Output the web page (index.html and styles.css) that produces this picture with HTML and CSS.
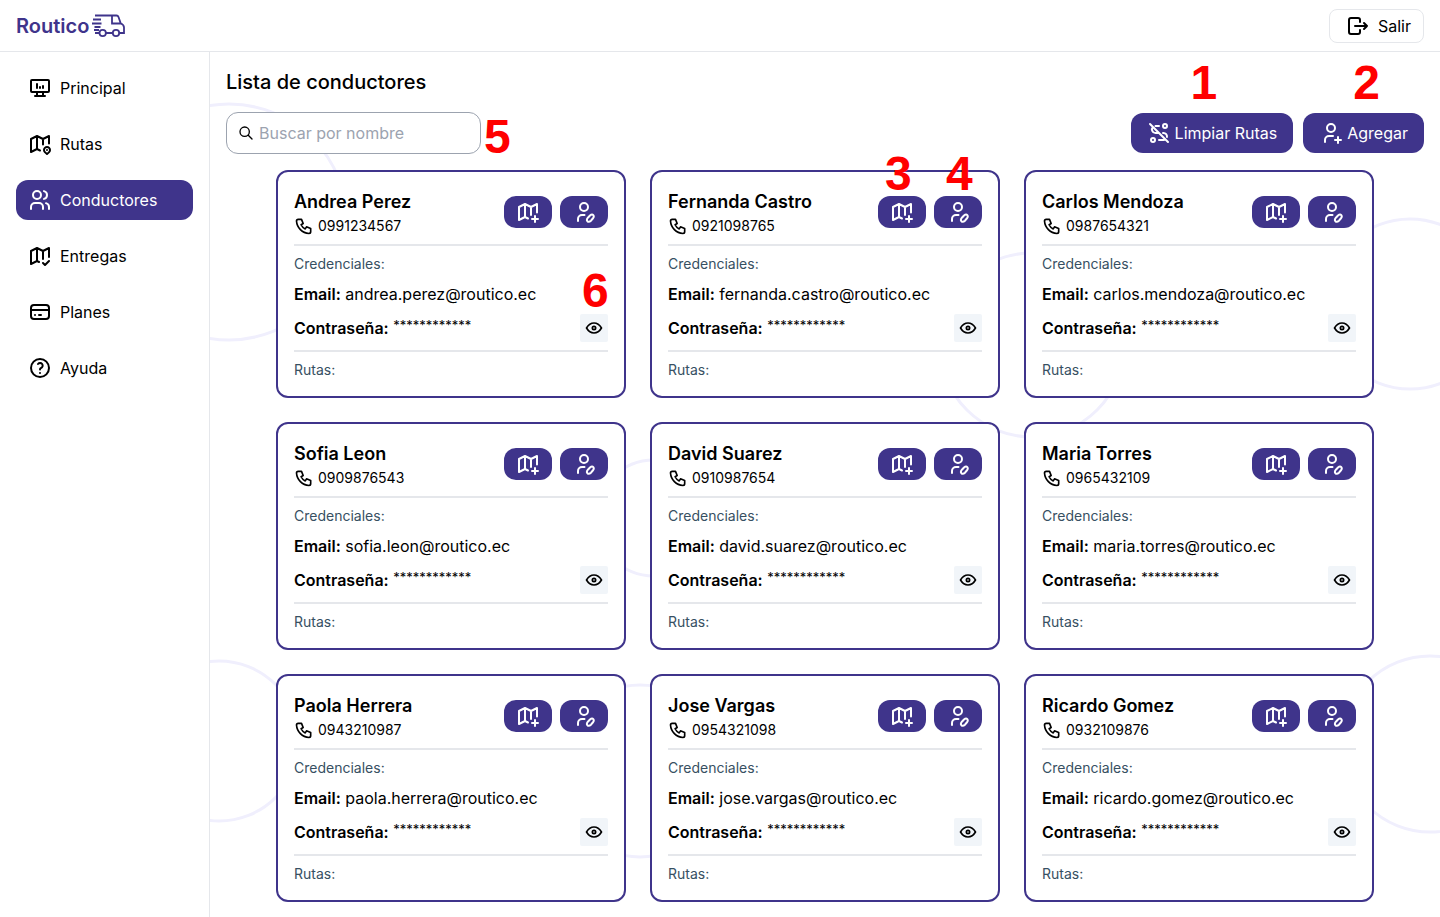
FILE: index.html
```html
<!DOCTYPE html>
<html lang="es">
<head>
<meta charset="utf-8">
<meta name="viewport" content="width=device-width, initial-scale=1">
<title>Routico - Lista de conductores</title>
<link rel="stylesheet" href="styles.css">
</head>
<body>
<svg class="sprite" aria-hidden="true">
  <symbol id="i-desktop" viewBox="0 0 24 24"><path d="M3 5a1 1 0 0 1 1 -1h16a1 1 0 0 1 1 1v10a1 1 0 0 1 -1 1h-16a1 1 0 0 1 -1 -1zM7 20h10M9 16v4M15 16v4M9 12v-4M12 12v-1M15 12v-2"/></symbol>
  <symbol id="i-map-pin" viewBox="0 0 24 24"><path d="M12 18.500l-3 -1.500l-6 3v-13l6 -3l6 3l6 -3v7.500M9 4v13M15 7v5.500M21.121 20.121a3 3 0 1 0 -4.242 0c.418 .419 1.125 1.045 2.121 1.879c1.051 -.89 1.759 -1.516 2.121 -1.879zM19 18v.01"/></symbol>
  <symbol id="i-users" viewBox="0 0 24 24"><path d="M5 7a4 4 0 1 0 8 0a4 4 0 1 0 -8 0M3 21v-2a4 4 0 0 1 4 -4h4a4 4 0 0 1 4 4v2M16 3.130a4 4 0 0 1 0 7.750M21 21v-2a4 4 0 0 0 -3 -3.850"/></symbol>
  <symbol id="i-map-check" viewBox="0 0 24 24"><path d="M11 18l-2 -1l-6 3v-13l6 -3l6 3l6 -3v9M9 4v13M15 7v8M15 19l2 2l4 -4"/></symbol>
  <symbol id="i-card" viewBox="0 0 24 24"><path d="M3 8a3 3 0 0 1 3 -3h12a3 3 0 0 1 3 3v8a3 3 0 0 1 -3 3h-12a3 3 0 0 1 -3 -3zM3 10h18M7 15h.01M11 15h2"/></symbol>
  <symbol id="i-help" viewBox="0 0 24 24"><path d="M3 12a9 9 0 1 0 18 0a9 9 0 1 0 -18 0M12 17v.01M12 13.500a1.500 1.500 0 0 1 1 -1.500a2.600 2.600 0 1 0 -3 -4"/></symbol>
  <symbol id="i-logout" viewBox="0 0 24 24"><path d="M14 8v-2a2 2 0 0 0 -2 -2h-7a2 2 0 0 0 -2 2v12a2 2 0 0 0 2 2h7a2 2 0 0 0 2 -2v-2M9 12h12l-3 -3M18 15l3 -3"/></symbol>
  <symbol id="i-route-off" viewBox="0 0 24 24"><path d="M4 19a2 2 0 1 0 4 0a2 2 0 1 0 -4 0M16 5a2 2 0 1 0 4 0a2 2 0 1 0 -4 0M12 19h4.500c.71 0 1.372 -.212 1.924 -.576m1.545 -2.459a3.500 3.500 0 0 0 -3.469 -3.965h-.499m-4 0h-3.501a3.500 3.500 0 0 1 -2.477 -5.972m2.477 -1.028h3.500M3 3l18 18"/></symbol>
  <symbol id="i-user-plus" viewBox="0 0 24 24"><path d="M8 7a4 4 0 1 0 8 0a4 4 0 0 0 -8 0M16 19h6M19 16v6M6 21v-2a4 4 0 0 1 4 -4h4"/></symbol>
  <symbol id="i-user-edit" viewBox="0 0 24 24"><path d="M8 7a4 4 0 1 0 8 0a4 4 0 0 0 -8 0M6 21v-2a4 4 0 0 1 4 -4h2.500M18 15.500c1.200 -1 2.700 -1 3.300 -.300c.600 .700 .500 2.100 -.500 3.300l-1.800 2.200c-1.200 1.100 -2.900 1.200 -3.600 .500c-.600 -.700 -.500 -2.300 .500 -3.500z"/></symbol>
  <symbol id="i-map-plus" viewBox="0 0 24 24"><path d="M12 18.500l-3 -1.500l-6 3v-13l6 -3l6 3l6 -3v8.500M9 4v13M15 7v8M16 19h6M19 16v6"/></symbol>
  <symbol id="i-phone" viewBox="0 0 24 24"><path d="M5 4h4l2 5l-2.500 1.500a11 11 0 0 0 5 5l1.500 -2.500l5 2v4a2 2 0 0 1 -2 2a16 16 0 0 1 -15 -15a2 2 0 0 1 2 -2"/></symbol>
  <symbol id="i-eye" viewBox="0 0 24 24"><path d="M10 12a2 2 0 1 0 4 0a2 2 0 0 0 -4 0M21 12c-2.400 4 -5.400 6 -9 6c-3.600 0 -6.600 -2 -9 -6c2.400 -4 5.400 -6 9 -6c3.600 0 6.600 2 9 6"/></symbol>
  <symbol id="i-search" viewBox="0 0 24 24"><path d="M3 10a7 7 0 1 0 14 0a7 7 0 1 0 -14 0M21 21l-6 -6"/></symbol>
</svg>

<header class="topbar">
  <a class="brand" href="#">Routico
    <svg class="truck" viewBox="0 0 33 24" aria-hidden="true"><path d="M3 1.500h21.500q1.500 0 2 1.500l2.300 6.500q3.200 1.200 3.200 4v5.500h-4.500M20 1.500v8h9M21 19h-7M7.500 19H3M1 5.500h8M0 9.500h9.500M2.500 13h6M2 16h5"/><circle cx="10.700" cy="19" r="3.200"/><circle cx="24" cy="19" r="3.200"/></svg>
  </a>
  <button class="logout" type="button"><svg class="icon"><use href="#i-logout"/></svg>Salir</button>
</header>

<div class="shell">
  <nav class="sidebar" aria-label="Menú">
    <a class="nav-item" href="#"><svg class="icon"><use href="#i-desktop"/></svg>Principal</a>
    <a class="nav-item" href="#"><svg class="icon"><use href="#i-map-pin"/></svg>Rutas</a>
    <a class="nav-item active" href="#" aria-current="page"><svg class="icon"><use href="#i-users"/></svg>Conductores</a>
    <a class="nav-item" href="#"><svg class="icon"><use href="#i-map-check"/></svg>Entregas</a>
    <a class="nav-item" href="#"><svg class="icon"><use href="#i-card"/></svg>Planes</a>
    <a class="nav-item" href="#"><svg class="icon"><use href="#i-help"/></svg>Ayuda</a>
  </nav>

  <main class="content">
    <svg class="rings" aria-hidden="true">
      <circle cx="19" cy="170" r="118"/><circle cx="822" cy="293" r="92"/><circle cx="1200" cy="252" r="85"/><circle cx="444" cy="466" r="58"/><circle cx="430" cy="719" r="86"/><circle cx="9" cy="689" r="80"/><circle cx="1220" cy="692" r="88"/>
    </svg>
    <h1 class="title">Lista de conductores</h1>
    <div class="toolbar">
      <div class="search">
        <label for="q"><svg class="icon icon-xs" role="img" aria-label="Buscar"><use href="#i-search"/></svg></label>
        <input id="q" type="text" placeholder="Buscar por nombre">
        <span class="mark mark-side">5</span>
      </div>
      <div class="actions">
        <button class="btn" type="button"><svg class="icon"><use href="#i-route-off"/></svg>Limpiar Rutas<span class="mark mark-above-left">1</span></button>
        <button class="btn" type="button"><svg class="icon"><use href="#i-user-plus"/></svg>Agregar<span class="mark mark-above">2</span></button>
      </div>
    </div>

    <div class="cards">
      <article class="card">
        <div class="card-head"><div><h2 class="name">Andrea Perez</h2><p class="phone"><svg class="icon icon-sm"><use href="#i-phone"/></svg>0991234567</p></div>
          <div class="tools"><button class="tool" type="button" aria-label="Asignar ruta"><svg class="icon"><use href="#i-map-plus"/></svg></button><button class="tool" type="button" aria-label="Editar conductor"><svg class="icon"><use href="#i-user-edit"/></svg></button></div></div>
        <hr class="rule"><p class="caption">Credenciales:</p>
        <p class="field"><b>Email:</b> andrea.perez@routico.ec</p>
        <div class="secret"><p class="field"><b>Contraseña:</b> <span class="stars">************</span></p><button class="eye" type="button" aria-label="Mostrar contraseña"><svg class="icon icon-sm"><use href="#i-eye"/></svg><span class="mark mark-eye">6</span></button></div>
        <hr class="rule"><p class="caption">Rutas:</p>
      </article>
      <article class="card">
        <div class="card-head"><div><h2 class="name">Fernanda Castro</h2><p class="phone"><svg class="icon icon-sm"><use href="#i-phone"/></svg>0921098765</p></div>
          <div class="tools"><button class="tool" type="button" aria-label="Asignar ruta"><svg class="icon"><use href="#i-map-plus"/></svg><span class="mark mark-tool">3</span></button><button class="tool" type="button" aria-label="Editar conductor"><svg class="icon"><use href="#i-user-edit"/></svg><span class="mark mark-tool-end">4</span></button></div></div>
        <hr class="rule"><p class="caption">Credenciales:</p>
        <p class="field"><b>Email:</b> fernanda.castro@routico.ec</p>
        <div class="secret"><p class="field"><b>Contraseña:</b> <span class="stars">************</span></p><button class="eye" type="button" aria-label="Mostrar contraseña"><svg class="icon icon-sm"><use href="#i-eye"/></svg></button></div>
        <hr class="rule"><p class="caption">Rutas:</p>
      </article>
      <article class="card">
        <div class="card-head"><div><h2 class="name">Carlos Mendoza</h2><p class="phone"><svg class="icon icon-sm"><use href="#i-phone"/></svg>0987654321</p></div>
          <div class="tools"><button class="tool" type="button" aria-label="Asignar ruta"><svg class="icon"><use href="#i-map-plus"/></svg></button><button class="tool" type="button" aria-label="Editar conductor"><svg class="icon"><use href="#i-user-edit"/></svg></button></div></div>
        <hr class="rule"><p class="caption">Credenciales:</p>
        <p class="field"><b>Email:</b> carlos.mendoza@routico.ec</p>
        <div class="secret"><p class="field"><b>Contraseña:</b> <span class="stars">************</span></p><button class="eye" type="button" aria-label="Mostrar contraseña"><svg class="icon icon-sm"><use href="#i-eye"/></svg></button></div>
        <hr class="rule"><p class="caption">Rutas:</p>
      </article>
      <article class="card">
        <div class="card-head"><div><h2 class="name">Sofia Leon</h2><p class="phone"><svg class="icon icon-sm"><use href="#i-phone"/></svg>0909876543</p></div>
          <div class="tools"><button class="tool" type="button" aria-label="Asignar ruta"><svg class="icon"><use href="#i-map-plus"/></svg></button><button class="tool" type="button" aria-label="Editar conductor"><svg class="icon"><use href="#i-user-edit"/></svg></button></div></div>
        <hr class="rule"><p class="caption">Credenciales:</p>
        <p class="field"><b>Email:</b> sofia.leon@routico.ec</p>
        <div class="secret"><p class="field"><b>Contraseña:</b> <span class="stars">************</span></p><button class="eye" type="button" aria-label="Mostrar contraseña"><svg class="icon icon-sm"><use href="#i-eye"/></svg></button></div>
        <hr class="rule"><p class="caption">Rutas:</p>
      </article>
      <article class="card">
        <div class="card-head"><div><h2 class="name">David Suarez</h2><p class="phone"><svg class="icon icon-sm"><use href="#i-phone"/></svg>0910987654</p></div>
          <div class="tools"><button class="tool" type="button" aria-label="Asignar ruta"><svg class="icon"><use href="#i-map-plus"/></svg></button><button class="tool" type="button" aria-label="Editar conductor"><svg class="icon"><use href="#i-user-edit"/></svg></button></div></div>
        <hr class="rule"><p class="caption">Credenciales:</p>
        <p class="field"><b>Email:</b> david.suarez@routico.ec</p>
        <div class="secret"><p class="field"><b>Contraseña:</b> <span class="stars">************</span></p><button class="eye" type="button" aria-label="Mostrar contraseña"><svg class="icon icon-sm"><use href="#i-eye"/></svg></button></div>
        <hr class="rule"><p class="caption">Rutas:</p>
      </article>
      <article class="card">
        <div class="card-head"><div><h2 class="name">Maria Torres</h2><p class="phone"><svg class="icon icon-sm"><use href="#i-phone"/></svg>0965432109</p></div>
          <div class="tools"><button class="tool" type="button" aria-label="Asignar ruta"><svg class="icon"><use href="#i-map-plus"/></svg></button><button class="tool" type="button" aria-label="Editar conductor"><svg class="icon"><use href="#i-user-edit"/></svg></button></div></div>
        <hr class="rule"><p class="caption">Credenciales:</p>
        <p class="field"><b>Email:</b> maria.torres@routico.ec</p>
        <div class="secret"><p class="field"><b>Contraseña:</b> <span class="stars">************</span></p><button class="eye" type="button" aria-label="Mostrar contraseña"><svg class="icon icon-sm"><use href="#i-eye"/></svg></button></div>
        <hr class="rule"><p class="caption">Rutas:</p>
      </article>
      <article class="card">
        <div class="card-head"><div><h2 class="name">Paola Herrera</h2><p class="phone"><svg class="icon icon-sm"><use href="#i-phone"/></svg>0943210987</p></div>
          <div class="tools"><button class="tool" type="button" aria-label="Asignar ruta"><svg class="icon"><use href="#i-map-plus"/></svg></button><button class="tool" type="button" aria-label="Editar conductor"><svg class="icon"><use href="#i-user-edit"/></svg></button></div></div>
        <hr class="rule"><p class="caption">Credenciales:</p>
        <p class="field"><b>Email:</b> paola.herrera@routico.ec</p>
        <div class="secret"><p class="field"><b>Contraseña:</b> <span class="stars">************</span></p><button class="eye" type="button" aria-label="Mostrar contraseña"><svg class="icon icon-sm"><use href="#i-eye"/></svg></button></div>
        <hr class="rule"><p class="caption">Rutas:</p>
      </article>
      <article class="card">
        <div class="card-head"><div><h2 class="name">Jose Vargas</h2><p class="phone"><svg class="icon icon-sm"><use href="#i-phone"/></svg>0954321098</p></div>
          <div class="tools"><button class="tool" type="button" aria-label="Asignar ruta"><svg class="icon"><use href="#i-map-plus"/></svg></button><button class="tool" type="button" aria-label="Editar conductor"><svg class="icon"><use href="#i-user-edit"/></svg></button></div></div>
        <hr class="rule"><p class="caption">Credenciales:</p>
        <p class="field"><b>Email:</b> jose.vargas@routico.ec</p>
        <div class="secret"><p class="field"><b>Contraseña:</b> <span class="stars">************</span></p><button class="eye" type="button" aria-label="Mostrar contraseña"><svg class="icon icon-sm"><use href="#i-eye"/></svg></button></div>
        <hr class="rule"><p class="caption">Rutas:</p>
      </article>
      <article class="card">
        <div class="card-head"><div><h2 class="name">Ricardo Gomez</h2><p class="phone"><svg class="icon icon-sm"><use href="#i-phone"/></svg>0932109876</p></div>
          <div class="tools"><button class="tool" type="button" aria-label="Asignar ruta"><svg class="icon"><use href="#i-map-plus"/></svg></button><button class="tool" type="button" aria-label="Editar conductor"><svg class="icon"><use href="#i-user-edit"/></svg></button></div></div>
        <hr class="rule"><p class="caption">Credenciales:</p>
        <p class="field"><b>Email:</b> ricardo.gomez@routico.ec</p>
        <div class="secret"><p class="field"><b>Contraseña:</b> <span class="stars">************</span></p><button class="eye" type="button" aria-label="Mostrar contraseña"><svg class="icon icon-sm"><use href="#i-eye"/></svg></button></div>
        <hr class="rule"><p class="caption">Rutas:</p>
      </article>
    </div>
  </main>
</div>
</body>
</html>
```
FILE: styles.css
```css
:root {
  --brand: #3f348b;
  --line: #e5e7eb;
}
* { box-sizing: border-box; margin: 0; }
body {
  min-height: 100vh;
  display: flex;
  flex-direction: column;
  font: 16px/24px Inter, "Noto Sans", sans-serif;
  color: #000;
  background: #fff;
}
button, input { font: inherit; color: inherit; }
button { border: 0; padding: 0; cursor: pointer; }
a { color: inherit; text-decoration: none; }
.sprite { position: absolute; width: 0; height: 0; }
.icon {
  width: 24px; height: 24px; flex: none; display: block;
  fill: none; stroke: currentColor; stroke-width: 2;
  stroke-linecap: round; stroke-linejoin: round;
}
.icon-sm { width: 20px; height: 20px; }
.icon-xs { width: 16px; height: 16px; }

.topbar {
  display: flex; align-items: center; justify-content: space-between;
  height: 52px; padding: 0 16px;
  border-bottom: 1px solid var(--line);
}
.brand {
  display: flex; align-items: center; gap: 3px;
  font-size: 20px; line-height: 28px; font-weight: 600; color: var(--brand);
}
.truck { width: 33px; height: 24px; fill: none; stroke: currentColor; stroke-width: 1.8; }
.logout {
  display: flex; align-items: center; gap: 8px;
  height: 34px; padding: 0 12px 0 16px;
  border: 1px solid var(--line); border-radius: 8px; background: #fff;
}

.shell { flex: 1; display: flex; }
.sidebar {
  flex: none; width: 210px; padding: 16px;
  display: flex; flex-direction: column; gap: 16px;
  border-right: 1px solid var(--line);
}
.nav-item {
  display: flex; align-items: center; gap: 8px;
  height: 40px; padding: 0 12px; border-radius: 12px;
}
.nav-item.active { background: var(--brand); color: #fff; }

.content { position: relative; z-index: 0; flex: 1; min-width: 0; padding: 16px 16px 8px; }
.rings {
  position: absolute; z-index: -1; inset: 0; width: 100%; height: 100%;
  fill: none; stroke: #f0effd; stroke-width: 3;
}
.title { font-size: 20px; line-height: 28px; font-weight: 500; }
.toolbar { display: flex; justify-content: space-between; align-items: center; margin: 16px 0; }
.search {
  position: relative; display: flex; align-items: center; gap: 5px;
  width: 255px; height: 42px; padding: 0 11px;
  border: 1px solid #9ca3af; border-radius: 12px; background: #fff;
}
.search input { width: 100%; min-width: 0; border: 0; padding: 0; outline: 0; background: none; }
.search input::placeholder { color: #9ca3af; opacity: 1; }
.actions { display: flex; gap: 10px; }
.btn {
  position: relative; display: flex; align-items: center; gap: 4px;
  height: 40px; padding: 0 16px; border-radius: 12px;
  background: var(--brand); color: #fff;
}

.cards { display: grid; grid-template-columns: repeat(auto-fit, 350px); justify-content: center; gap: 24px; }
.card {
  display: flex; flex-direction: column; gap: 8px;
  padding: 16px; border: 2px solid var(--brand); border-radius: 12px; background: #fff;
}
.card-head { display: flex; align-items: center; justify-content: space-between; }
.name { font-size: 18px; line-height: 28px; font-weight: 600; }
.phone { display: flex; align-items: center; gap: 4px; font-size: 14px; line-height: 20px; }
.tools { display: flex; gap: 8px; }
.tool {
  position: relative; display: grid; place-items: center;
  width: 48px; height: 32px; border-radius: 12px;
  background: var(--brand); color: #fff;
}
.rule { width: 100%; height: 2px; border: 0; background: var(--line); }
.caption { font-size: 14px; line-height: 20px; color: #375062; }
.field b { font-weight: 600; }
.secret { display: flex; align-items: center; justify-content: space-between; }
.stars { font-size: 13px; line-height: 1; vertical-align: 4px; }
.eye { position: relative; display: grid; place-items: center; width: 28px; height: 28px; border-radius: 2px; background: #f1f5f9; }

/* Numbered callouts over the controls */
.mark, .mark-tool-end {
  position: absolute; z-index: 1; pointer-events: none;
  font: 700 48px/48px "Liberation Sans", Arial, sans-serif; color: #f00;
}
.mark-side { left: 257px; top: 0; }
.mark-above-left { left: 60px; top: -54px; }
.mark-above { left: 50px; top: -54px; }
.mark-tool { left: 7px; top: -46px; }
.mark-tool-end { left: 12px; top: -46px; }
.mark-eye { left: 2px; top: -47px; }
```
